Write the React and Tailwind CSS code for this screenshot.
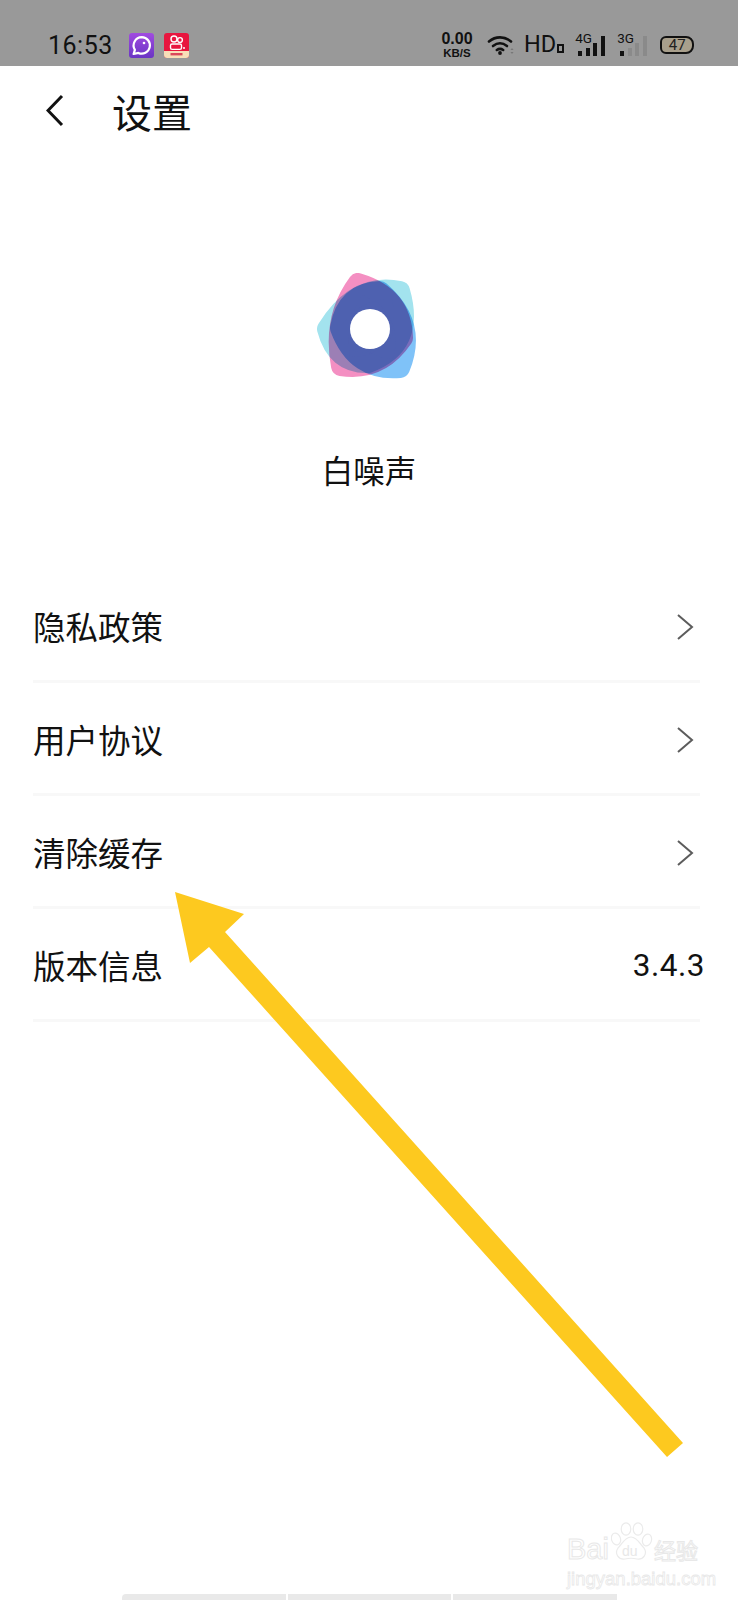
const cjk = "font-['Noto_Sans_CJK_SC','Noto_Sans',sans-serif]";

function ChatBadge() {
  return (
    <svg width="25" height="25" viewBox="0 0 25 25" className="block">
      <defs>
        <linearGradient id="chat" x1="0" y1="0" x2="0" y2="1">
          <stop offset="0" stopColor="#a14be0" />
          <stop offset="1" stopColor="#6a35c4" />
        </linearGradient>
      </defs>
      <rect width="25" height="25" rx="3" fill="url(#chat)" />
      <path d="M12.8 4.2a8.2 8.2 0 1 1-3.4 15.7L4.6 21l1.3-4.2A8.2 8.2 0 0 1 12.8 4.2z" fill="none" stroke="#fff" strokeWidth="2.2" strokeLinejoin="round" />
      <circle cx="15" cy="10" r="1.3" fill="#fff" />
    </svg>
  );
}

function VideoBadge() {
  return (
    <svg width="25" height="25" viewBox="0 0 25 25" className="block">
      <rect width="25" height="25" rx="3" fill="#e8163f" />
      <path d="M0 18h25v4a3 3 0 0 1-3 3H3a3 3 0 0 1-3-3z" fill="#f8dfb8" />
      <g fill="none" stroke="#fff" strokeWidth="1.4">
        <circle cx="10" cy="6" r="3" />
        <circle cx="16" cy="7" r="2.4" />
        <rect x="6.5" y="11" width="11" height="5.4" rx="1.6" />
      </g>
      <circle cx="20" cy="15" r="1" fill="#fff" />
      <rect x="6.5" y="20" width="12" height="2.4" fill="#d9485a" />
    </svg>
  );
}

function Wifi() {
  return (
    <svg width="28" height="20" viewBox="0 0 28 20" className="block">
      <g fill="none" stroke="#111" strokeWidth="2.6" strokeLinecap="round">
        <path d="M2 6.5C8.5 1 17.5 1 24 6.5" />
        <path d="M6 11c4.400-3.500 9.600-3.500 14 0" />
        <path d="M9.800 15c2-1.400 4.400-1.400 6.400 0" />
      </g>
      <circle cx="13" cy="18" r="1.900" fill="#111" />
      <path d="M25 13l1.500 2h-3zM25 19l1.500-2h-3z" fill="#777" />
    </svg>
  );
}

function Signal({ label, levels }) {
  return (
    <div className="relative h-[22px] w-[32px]">
      <span className="absolute left-0 top-[-2px] font-['Roboto',sans-serif] text-[13.500px] leading-[13px] text-[#111]">{label}</span>
      <div className="absolute bottom-[0px] left-[3px] flex items-end gap-[3.500px]">
        {levels.map((l, i) => (
          <div key={i} className={l.cls} />
        ))}
      </div>
    </div>
  );
}

function Battery() {
  return (
    <div className="flex h-[18px] w-[34px] items-center justify-center rounded-l-[6px] rounded-r-[8px] border-2 border-[#111] bg-[#a89f8c] font-['Roboto',sans-serif] text-[15px] leading-none text-[#222]">47</div>
  );
}

function StatusBar() {
  return (
    <div className="flex h-[66px] items-center bg-[#999999] pl-[48px] pt-[24px] text-[#111]">
      <span className="w-[81px] font-['Roboto',sans-serif] text-[25px] leading-none tracking-[0.5px]">16:53</span>
      <ChatBadge />
      <div className="ml-[10px]"><VideoBadge /></div>
      <div className="ml-[251px] flex w-[34px] flex-col items-center font-['Liberation_Sans',sans-serif] font-bold leading-none">
        <span className="text-[16px]">0.00</span>
        <span className="mt-[1px] text-[11.500px]">KB/S</span>
      </div>
      <div className="ml-[13px]"><Wifi /></div>
      <div className="ml-[9px] flex items-end font-['Roboto',sans-serif] text-[23.500px] leading-none">
        <span>HD</span>
        <span className="mb-[4px] ml-[1px] block h-[9px] w-[7px] border-2 border-[#111]" />
      </div>
      <div className="ml-[11px]">
        <Signal
          label="4G"
          levels={[
            { cls: "h-[5px] w-[4px] bg-[#111]" },
            { cls: "h-[8px] w-[4px] bg-[#111]" },
            { cls: "h-[13px] w-[4px] bg-[#111]" },
            { cls: "h-[20px] w-[4px] bg-[#111]" },
          ]}
        />
      </div>
      <div className="ml-[10px]">
        <Signal
          label="3G"
          levels={[
            { cls: "h-[5px] w-[4px] bg-[#111]" },
            { cls: "h-[8px] w-[4px] bg-[#8a8a8a]" },
            { cls: "h-[13px] w-[4px] bg-[#8a8a8a]" },
            { cls: "h-[20px] w-[4px] bg-[#8a8a8a]" },
          ]}
        />
      </div>
      <div className="ml-[11px]"><Battery /></div>
    </div>
  );
}

// Three overlapping petals; multiply blending yields the deep blue core.
function Logo() {
  return (
    <svg width="110" height="114" viewBox="314 270 110 114" className="block" style={{ isolation: "isolate" }}>
      <g strokeLinejoin="round" strokeWidth="20">
        <path d="M358 283 Q332 318 341 366 Q380 372 403 338 Q402 296 358 283 Z" fill="#f48fc2" stroke="#f48fc2" />
        <path d="M400 291 Q356 282 327 329 Q336 364 368 363 Q416 346 400 291 Z" fill="#a3e3ee" stroke="#a3e3ee" style={{ mixBlendMode: "multiply" }} />
        <path d="M380 291 Q346 292 340 328 Q356 372 400 368 Q418 324 380 291 Z" fill="#7fc2f8" stroke="#7fc2f8" style={{ mixBlendMode: "multiply" }} />
      </g>
      <circle cx="370" cy="329" r="20" fill="#fff" />
    </svg>
  );
}

function Chevron() {
  return (
    <svg width="20" height="30" viewBox="0 0 20 30" className="block">
      <path d="M3 3 L17 15 L3 27" fill="none" stroke="#5c5c5c" strokeWidth="2" />
    </svg>
  );
}

function Row({ label, value }) {
  return (
    <div className="flex h-[113px] items-center justify-between border-b-[3px] border-[#f8f8f8] pt-[4px]">
      <span className={`${cjk} text-[32.500px] leading-none text-[#111]`}>{label}</span>
      {value ? (
        <span className="mr-[-5px] font-['Roboto',sans-serif] text-[31.500px] leading-none tracking-[0.5px] text-[#111]">{value}</span>
      ) : (
        <span className="mr-[5px]"><Chevron /></span>
      )}
    </div>
  );
}

function Pointer() {
  return (
    <svg width="738" height="1600" viewBox="0 0 738 1600" className="pointer-events-none absolute left-0 top-0">
      <path d="M175 892 L244 914 L225 932 L683 1443 L667 1457 L209 947 L190 963 Z" fill="#fdc91f" />
    </svg>
  );
}

function PawMark() {
  return (
    <svg width="42" height="40" viewBox="0 0 42 40" className="block">
      <g fill="#fff" stroke="#ebebeb" strokeWidth="1.200">
        <ellipse cx="5" cy="17" rx="4.500" ry="6" transform="rotate(-18 5 17)" />
        <ellipse cx="15" cy="7" rx="4.800" ry="6.200" />
        <ellipse cx="27" cy="7" rx="4.800" ry="6.200" />
        <ellipse cx="36" cy="18" rx="4.500" ry="6" transform="rotate(18 36 18)" />
        <path d="M20 15c6 0 9 7 13 11 4 6-1 12-7 11-4-1-8-1-12 0-6 1-11-5-7-11 4-4 7-11 13-11z" />
      </g>
    </svg>
  );
}

function Watermark() {
  return (
    <div className="pointer-events-none absolute left-[567px] top-[1520px] w-[135px]">
      <div className="flex h-[42px] items-end">
        <span className="font-['Liberation_Sans',sans-serif] text-[29px] leading-[26px] text-white [-webkit-text-stroke:1px_#e8e8e8]">Bai</span>
        <span className="relative ml-[2px]">
          <PawMark />
          <span className="absolute bottom-[4px] left-[11px] font-['Liberation_Sans',sans-serif] text-[14px] leading-none text-[#e8e8e8]">du</span>
        </span>
        <span className={`${cjk} ml-[1px] text-[22px] leading-[26px] text-white [-webkit-text-stroke:1px_#e8e8e8]`}>经验</span>
      </div>
      <div className="mt-[8px] font-['Liberation_Sans',sans-serif] text-[18.500px] leading-[18px] text-white [-webkit-text-stroke:0.800px_#e8e8e8]">jingyan.baidu.com</div>
    </div>
  );
}

export default function App() {
  return (
    <div className="relative h-[1600px] w-[738px] overflow-hidden bg-white">
      <StatusBar />
      <header className="flex h-[90px] items-center pb-[1px] pl-[46px]">
        <svg width="18" height="33" viewBox="0 0 18 33" className="block">
          <path d="M16 2 L2 16.500 L16 31" fill="none" stroke="#111" strokeWidth="3" />
        </svg>
        <h1 className={`${cjk} ml-[48px] text-[40px] font-normal leading-none text-[#111]`}>设置</h1>
      </header>

      <section className="flex flex-col items-center pt-[114px]">
        <Logo />
        <p className={`${cjk} mt-[70px] text-[31.500px] leading-none text-[#111]`}>白噪声</p>
      </section>

      <ul className="mx-[33px] mt-[84px] w-[667px]">
        <li><Row label="隐私政策" /></li>
        <li><Row label="用户协议" /></li>
        <li><Row label="清除缓存" /></li>
        <li><Row label="版本信息" value="3.4.3" /></li>
      </ul>

      <Pointer />
      <Watermark />

      <div className="absolute bottom-0 left-[122px] flex h-[6px] w-[495px] gap-[2px] overflow-hidden rounded-tl-sm">
        <div className="flex-1 bg-[#e9e9e9]" />
        <div className="flex-1 bg-[#e9e9e9]" />
        <div className="flex-1 bg-[#e9e9e9]" />
      </div>
    </div>
  );
}
